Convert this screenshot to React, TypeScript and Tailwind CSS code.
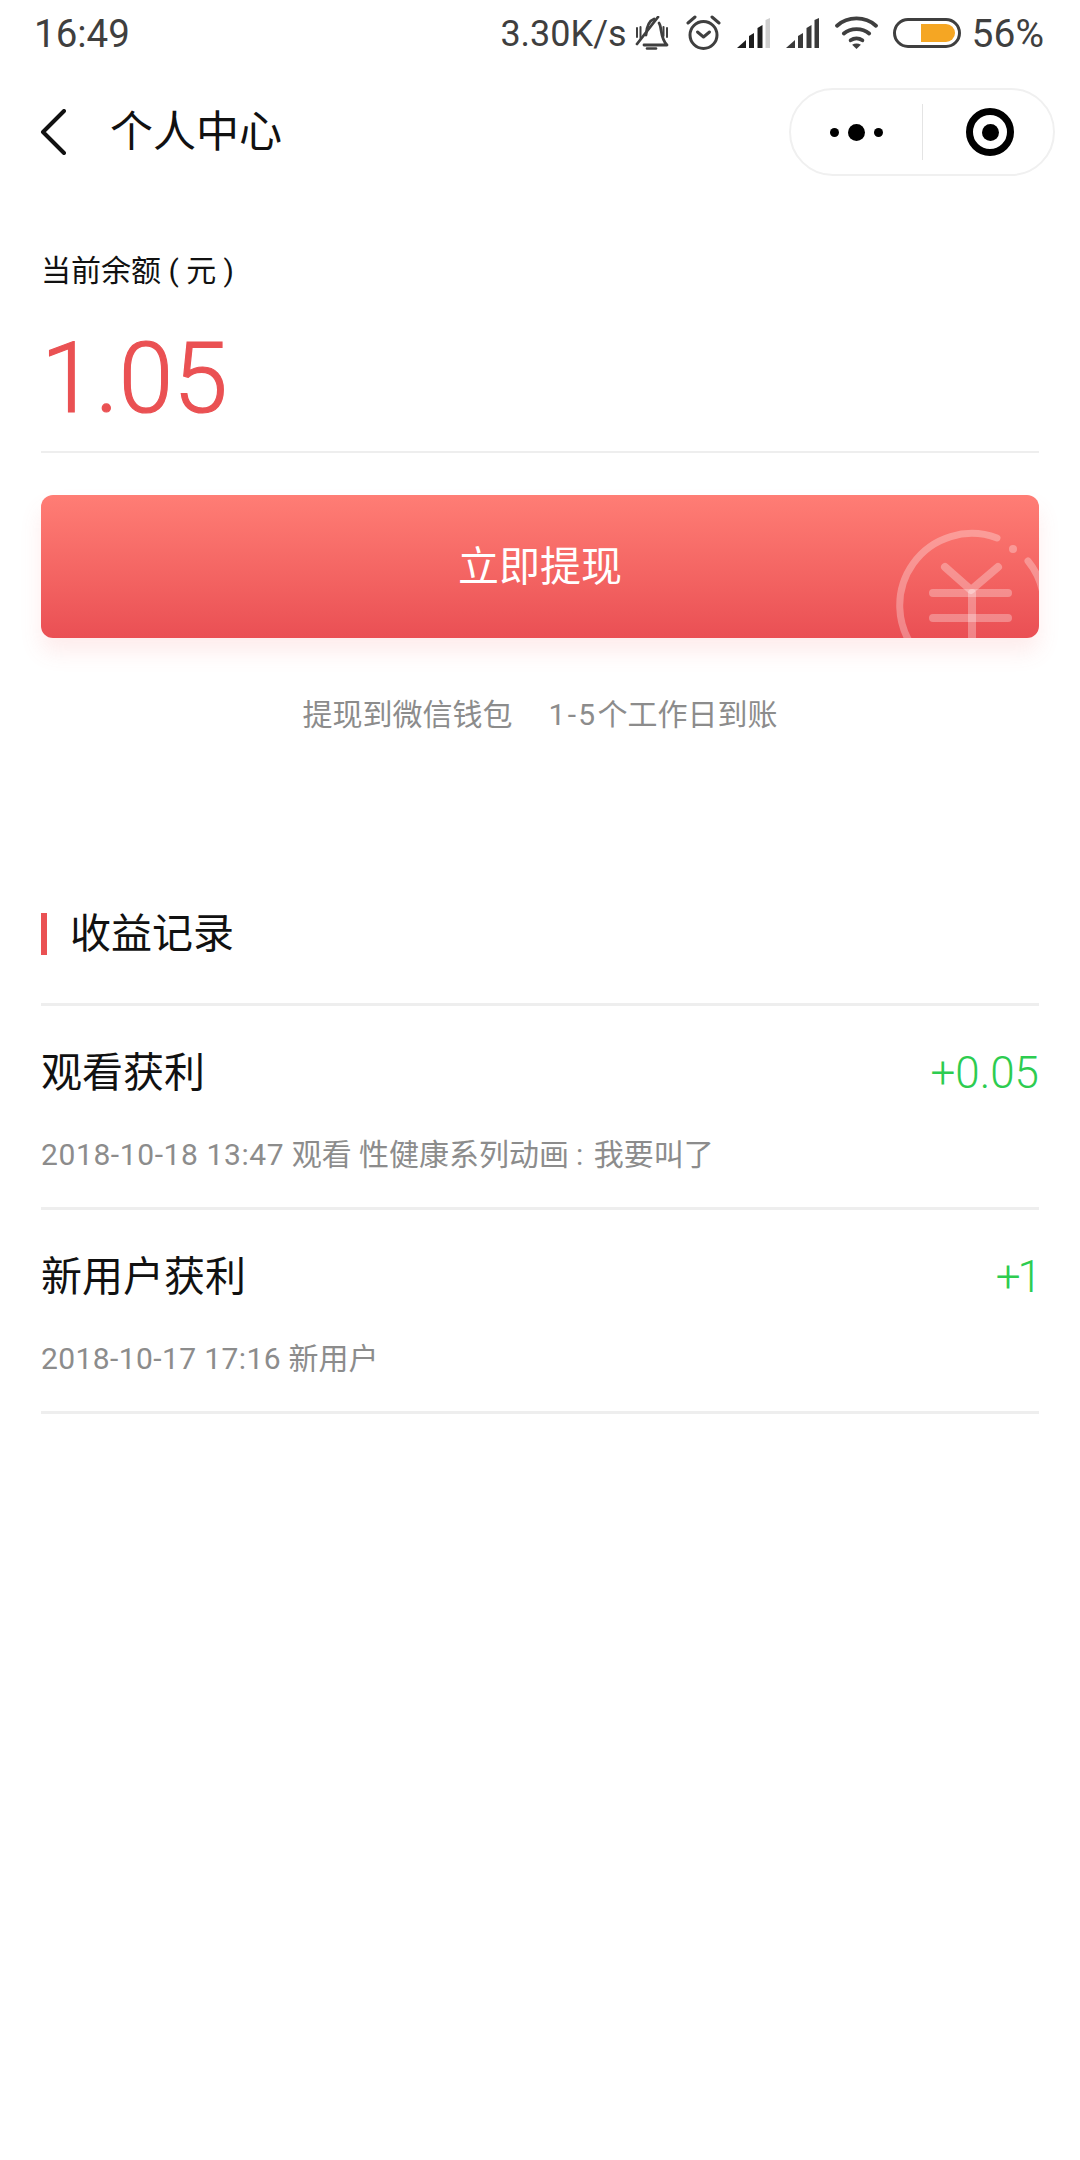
const font = { fontFamily: '"Roboto", "Noto Sans CJK SC", sans-serif' };

function Bell() {
  return (
    <svg width="34" height="34" viewBox="0 0 34 34" fill="none" stroke="#3f3f3f" strokeWidth="2.800" strokeLinecap="round" strokeLinejoin="round">
      <path d="M11 19C11.500 12 13 5 19 3" />
      <path d="M24 7c3 4 1 15 8 22H9" />
      <path d="M12 32.500h9" strokeWidth="2.600" />
      <path d="M2 28 23 1" />
      <path d="M2 12v9M5.500 11v11M32 12v9M28.500 11v9" strokeWidth="2" />
    </svg>
  );
}

function Alarm() {
  return (
    <svg width="35" height="35" viewBox="0 0 35 35" fill="none" stroke="#3f3f3f" strokeWidth="3" strokeLinecap="round" strokeLinejoin="round">
      <circle cx="17.500" cy="20" r="13.500" />
      <path d="M11.500 17l6 5 6-5" />
      <path d="M2 8l7-6M33 8l-7-6" />
    </svg>
  );
}

function Signal({ main, last }: { main: string; last: string }) {
  return (
    <svg width="33" height="30" viewBox="0 0 33 30">
      <path d="M0 30 9 22V30Z" fill={main} />
      <path d="M12 18 17 15V30H12Z" fill={main} />
      <path d="M20.500 10 25.500 7V30H20.500Z" fill={main} />
      <path d="M28.500 2 33 0V30H28.500Z" fill={last} />
    </svg>
  );
}

function Wifi() {
  return (
    <svg width="43" height="35" viewBox="0 0 44 36" fill="none" stroke="#3f3f3f" strokeWidth="4" strokeLinecap="round">
      <path d="M2 11c11-10 29-10 40 0" />
      <path d="M9 19c7-6 19-6 26 0" />
      <path d="M16 26c3.500-2.500 8.500-2.500 12 0" />
      <path d="M22 35l-4.500-4.500c2.500-1.500 6.500-1.500 9 0Z" fill="#3f3f3f" stroke="none" />
    </svg>
  );
}

function Coin() {
  const c = "rgba(255,255,255,0.3)";
  return (
    <svg className="absolute right-0 top-0" width="143" height="143" viewBox="0 0 143 143" fill="none" stroke={c} strokeWidth="7" strokeLinecap="round" strokeLinejoin="round">
      <path d="M101 43A72 72 0 0 0 20 156" />
      <circle cx="117" cy="54" r="4" fill={c} stroke="none" />
      <path d="M132 66A72 72 0 0 1 148 111" />
      <path d="M49 72 75 95 102 72" strokeWidth="8" />
      <path d="M37 98h75M37 123h75" strokeWidth="8" />
      <path d="M76 98v50" strokeWidth="8" />
    </svg>
  );
}

function Row({ title, value, children }: { title: string; value: string; children: React.ReactNode }) {
  return (
    <div className="h-[204px] border-b-[3px] border-[#eeeeee] pt-[42px]">
      <div className="flex items-center justify-between leading-[50px]">
        <span className="text-[41px] text-[#111111]">{title}</span>
        <span className={value === "+1" ? "text-[44px] font-light tracking-[-3px] text-[#2dcc50]" : "text-[44px] font-light text-[#2dcc50]"}>{value}</span>
      </div>
      <div className="mt-[37px] text-[30px] leading-[40px] text-[#8c8c8c]">{children}</div>
    </div>
  );
}

export default function App() {
  return (
    <div className="h-[2160px] w-[1080px] bg-white" style={font}>
      <div className="flex h-[68px] items-center justify-between pl-[34px] pr-[36px] text-[#3f3f3f]">
        <span className="text-[38.500px]">16:49</span>
        <div className="flex items-center">
          <span className="text-[36px]">3.30K/s</span>
          <div className="mb-[3px] ml-[8px] flex items-center">
            <Bell />
            <div className="ml-[17px]"><Alarm /></div>
            <div className="ml-[16px]"><Signal main="#1d1d1d" last="#cfcfcf" /></div>
            <div className="ml-[16px]"><Signal main="#3a3a3a" last="#3a3a3a" /></div>
            <div className="ml-[16px]"><Wifi /></div>
            <div className="relative ml-[15px] h-[30px] w-[68px] rounded-full border-[3.500px] border-[#3f3f3f]">
              <div className="absolute bottom-[3px] right-[3px] top-[3px] w-[34px] rounded-r-full rounded-l-[2px] bg-[#f5a623]" />
            </div>
          </div>
          <span className="ml-[11px] text-[39px]">56%</span>
        </div>
      </div>

      <div className="flex h-[128px] items-center pl-[40px] pr-[25px]">
        <svg width="26" height="46" viewBox="0 0 26 46" fill="none" stroke="#111" strokeWidth="4" strokeLinecap="round" strokeLinejoin="round">
          <path d="M24 2 3 23l21 21" />
        </svg>
        <span className="ml-[44px] text-[43px] text-[#111111]">个人中心</span>
        <div className="ml-auto flex h-[88px] w-[266px] items-center rounded-full border-2 border-[#f0f0f0]">
          <div className="flex w-[131px] items-center justify-center gap-[9px]">
            <span className="h-[9px] w-[9px] rounded-full bg-black" />
            <span className="h-[17px] w-[17px] rounded-full bg-black" />
            <span className="h-[9px] w-[9px] rounded-full bg-black" />
          </div>
          <div className="h-[56px] w-px bg-[#e4e4e4]" />
          <div className="flex flex-1 items-center justify-center pl-[4px]">
            <div className="flex h-[48px] w-[48px] items-center justify-center rounded-full border-[7px] border-black">
              <div className="h-[17px] w-[17px] rounded-full bg-black" />
            </div>
          </div>
        </div>
      </div>

      <div className="px-[41px]">
        <div className="mt-[55px] whitespace-pre text-[30px] leading-[40px] text-[#111111]">当前余额 ( 元 )</div>
        <div className="mt-[28px] text-[98px] font-light leading-[120px] text-[#ea5153] [-webkit-text-stroke:1.2px_#ea5153]">1.05</div>
        <div className="mt-[12px] h-[2px] bg-[#eeeeee]" />

        <div className="relative mt-[42px] flex h-[143px] items-center justify-center overflow-hidden rounded-[12px] bg-gradient-to-b from-[#ff7d75] to-[#ea4f54] pt-[3px] shadow-[0_14px_22px_rgba(250,100,100,0.12)]">
          <span className="text-[41px] text-white">立即提现</span>
          <Coin />
        </div>

        <div className="mt-[57px] flex justify-center gap-[36px] text-[30px] leading-[40px] text-[#8c8c8c]">
          <span>提现到微信钱包</span>
          <span><span className="tracking-[2.300px]">1-5</span>个工作日到账</span>
        </div>

        <div className="mt-[178px] flex h-[42px] items-center border-l-[6px] border-[#ea5153] pl-[23px] pt-[2px] text-[41px] text-[#111111]">收益记录</div>
        <div className="mt-[48px] h-[3px] bg-[#eeeeee]" />

        <Row title="观看获利" value="+0.05">
          <span className="tracking-[0.6px]">2018-10-18 13:47</span> 观看 性健康系列动画<span className="ml-[7px] mr-[3px]">:</span> 我要叫了
        </Row>
        <Row title="新用户获利" value="+1">
          <span className="tracking-[0.4px]">2018-10-17 17:16</span> 新用户
        </Row>
      </div>
    </div>
  );
}
